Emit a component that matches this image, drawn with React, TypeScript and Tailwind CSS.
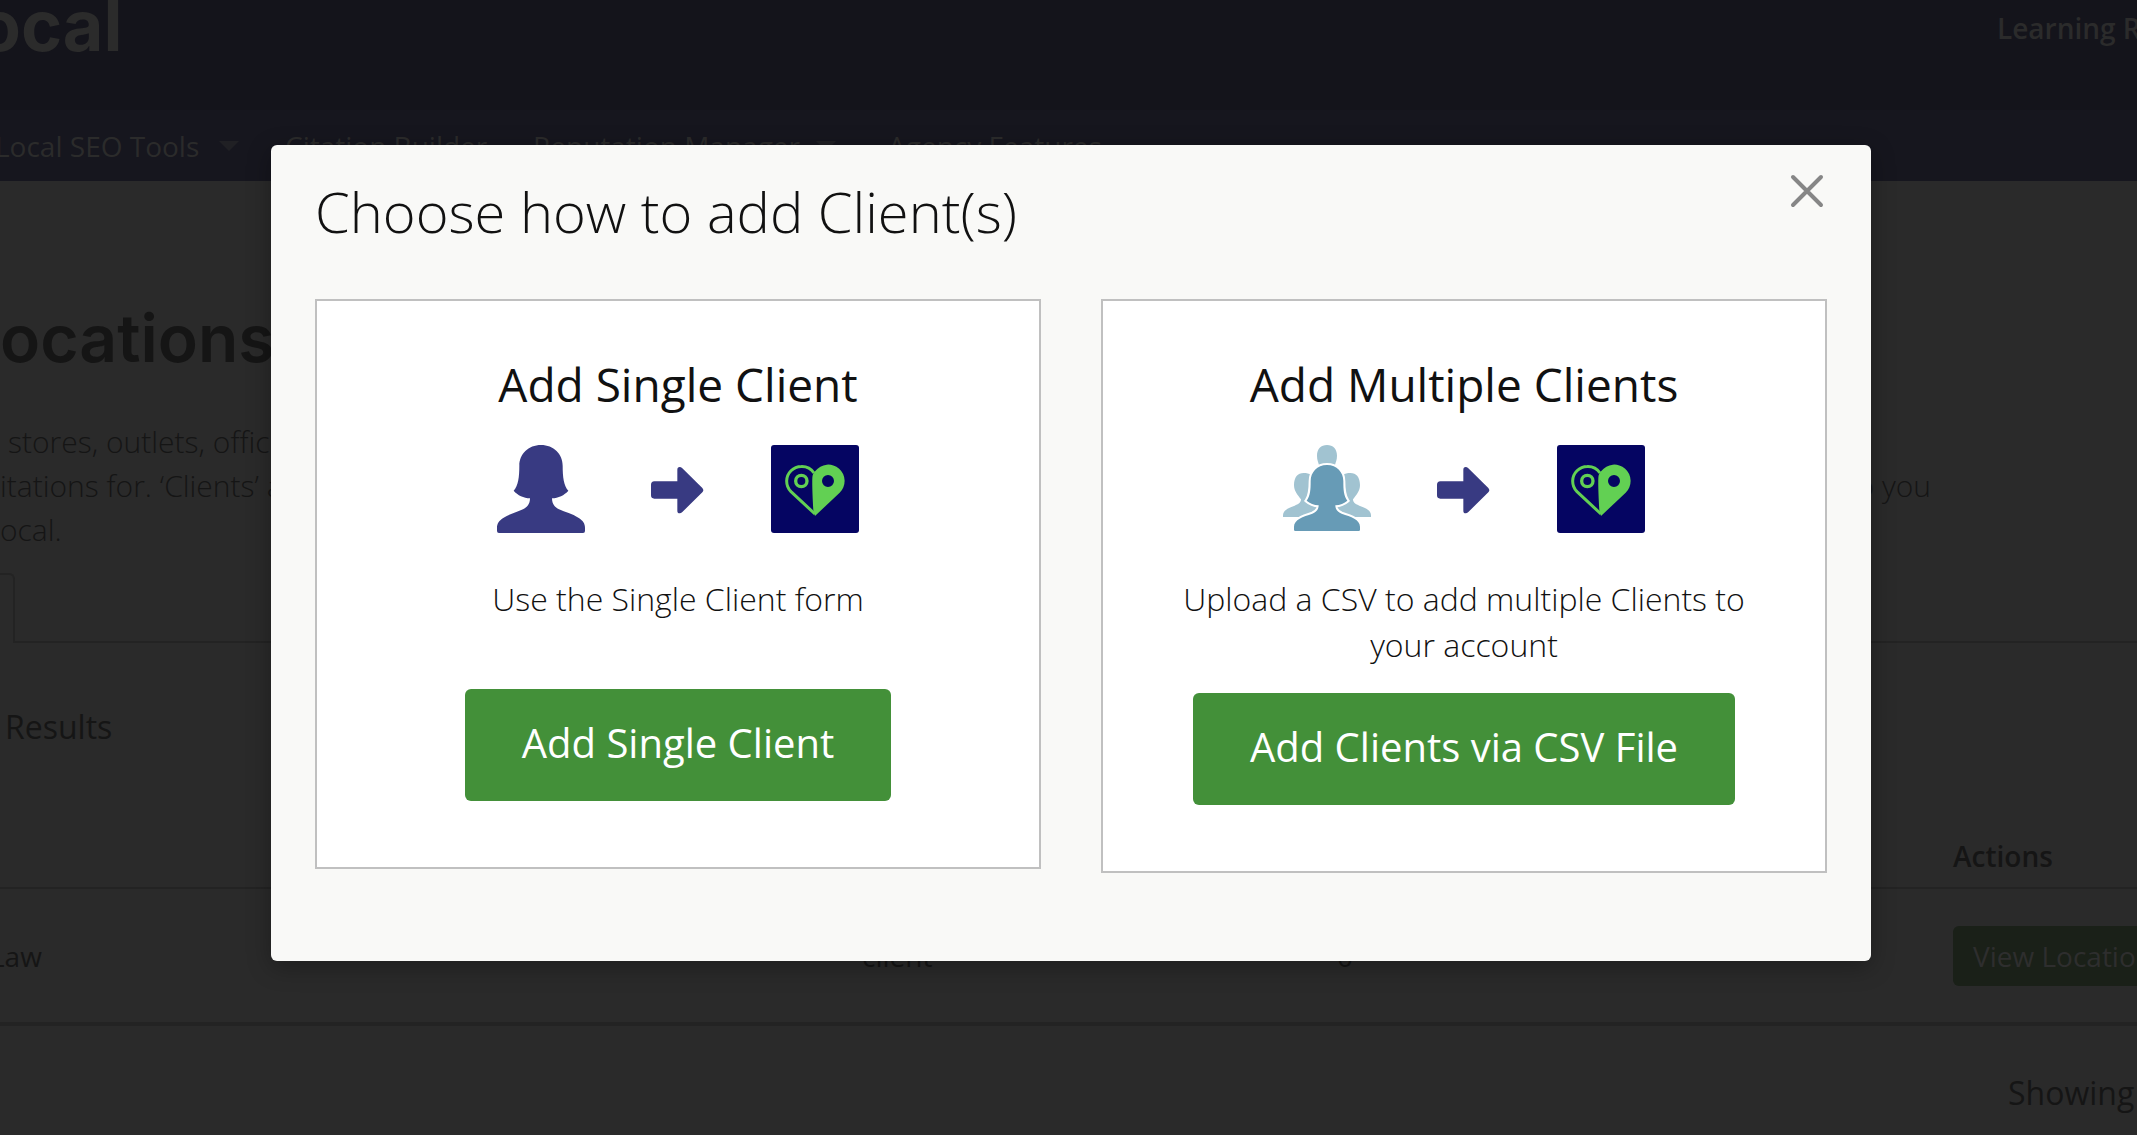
import type { ReactNode } from "react";

function PersonIcon() {
  return (
    <svg viewBox="0 0 264 264" className="size-22" aria-hidden="true">
      <path
        fill="#383a82"
        d="M132 0C94 0 67 27 67 62C67 95 64 122 50 137C62 151 80 159 99 160C99 178 90 187 78 193C60 201 38 207 20 218C6 226 0 236 0 248V258Q0 264 6 264H258Q264 264 264 258V248C264 236 258 226 244 218C226 207 204 201 186 193C174 187 165 178 165 160C184 159 202 151 214 137C200 122 197 95 197 62C197 27 170 0 132 0Z"
      />
    </svg>
  );
}

function GroupIcon() {
  const side =
    "M62 84C44 84 33 97 33 120C33 138 44 150 54 163C54 174 45 178 35 182C15 189 0 197 0 210V216H120V90H85C78 86 71 84 62 84Z";
  const front =
    "M132 60C102 60 83 82 83 108C83 135 82 152 71 167C80 175 93 180 107 181C107 195 98 202 88 206C60 215 33 224 33 245V254Q33 258 37 258H227Q231 258 231 254V245C231 224 204 215 176 206C166 202 157 195 157 181C171 180 184 175 193 167C182 152 181 135 181 108C181 82 162 60 132 60Z";
  return (
    <svg viewBox="0 0 264 264" className="size-22" aria-hidden="true">
      <g fill="#a1c3d1">
        <path d="M132 0C150 0 162 12 162 32C162 45 158 52 156 60H108C106 52 102 45 102 32C102 12 114 0 132 0Z" />
        <path d={side} />
        <path d={side} transform="matrix(-1 0 0 1 264 0)" />
      </g>
      <path d={front} fill="#fff" stroke="#fff" strokeWidth="12" />
      <path d={front} fill="#679bb6" />
    </svg>
  );
}

function ArrowIcon() {
  return (
    <svg viewBox="0 0 168 264" className="h-22 w-14" aria-hidden="true">
      <path
        fill="#383a82"
        d="M3 120Q3 109 13 109H82V74Q82 66 89 66Q93 66 97 70L157 129Q163 136 157 142L97 201Q93 205 89 205Q82 205 82 197V161H13Q3 161 3 151Z"
      />
    </svg>
  );
}

function HeartPinIcon() {
  return (
    <svg viewBox="0 0 264 264" className="size-22" aria-hidden="true">
      <rect width="264" height="264" rx="9" fill="#050562" />
      <path
        fill="none"
        stroke="#62d053"
        strokeWidth="9"
        d="M129 84A44 44 0 0 0 91 64.500A44 44 0 0 0 47 108C47 122 52 132 60 140L132 207"
      />
      <circle cx="91" cy="108" r="17" fill="none" stroke="#62d053" strokeWidth="10" />
      <path
        fill="#62d053"
        fillRule="evenodd"
        d="M132 213L127 196C125 160 123 120 124 98C124 90 128 82 133 78A49 49 0 1 1 206 143ZM171 90A18 18 0 1 0 171 126A18 18 0 1 0 171 90Z"
      />
    </svg>
  );
}

function Caret() {
  return <span className="border-x-10 border-t-10 border-x-transparent border-t-[#202024]" />;
}

function OptionCard({
  title,
  icon,
  text,
  action,
}: {
  title: string;
  icon: ReactNode;
  text: string;
  action: string;
}) {
  return (
    <section className="flex flex-1 flex-col items-center border-2 border-[#c0c0c0] bg-white px-16 pt-12 pb-[66px] text-center">
      <h3 className="text-[46px] leading-[70px]">{title}</h3>
      <div className="mt-[26px] flex w-[362px] items-center justify-between">
        {icon}
        <ArrowIcon />
        <HeartPinIcon />
      </div>
      <p className="mt-[43px] min-h-[88px] text-[32px] leading-[46px] font-light">{text}</p>
      <button
        type="button"
        className="mt-[25px] h-28 rounded-md bg-[#439039] px-[57px] pb-1 text-[40px] leading-[56px] text-white"
      >
        {action}
      </button>
    </section>
  );
}

export default function App() {
  return (
    <div className="relative h-screen overflow-hidden bg-[#2a2a2a] font-['Open_Sans',sans-serif] text-[#151515]">
      <header>
        <div className="flex h-[110px] items-start justify-between bg-[#14141b] text-[#2b2b2b]">
          <span className="-ml-[22px] -mt-[18px] font-['Inter',sans-serif] text-[70px] leading-[88px] font-bold">ocal</span>
          <a href="#learning" className="w-[140px] pt-2 text-[28px] leading-[40px] font-semibold whitespace-nowrap">
            Learning R
          </a>
        </div>
        <nav className="flex h-[71px] items-center bg-[#16161e] text-[28px] leading-[40px] text-[#2b2b2b]">
          <a href="#seo" className="-ml-[5px] flex w-[290px] items-center gap-5">
            Local SEO Tools <Caret />
          </a>
          <a href="#citation" className="w-[248px]">Citation Builder</a>
          <a href="#reputation" className="flex w-[355px] items-center gap-4">
            Reputation Manager <Caret />
          </a>
          <a href="#agency">Agency Features</a>
        </nav>
      </header>

      <main>
        <h1 className="pt-[111px] font-['Inter',sans-serif] text-[66px] leading-[92px] font-semibold">ocations</h1>
        <div className="mt-9 pr-[206px] text-[30px] leading-[44px] font-light">
          <p className="pl-2">stores, outlets, offic</p>
          <p className="flex justify-between">
            <span>itations for. ‘Clients’ a</span>
            <span>to you</span>
          </p>
          <p>ocal.</p>
        </div>
        <div className="mt-[21px] flex h-[70px]">
          <div className="w-[15px] rounded-tr-md border-t-2 border-r-2 border-[#232323]" />
          <div className="flex-1 border-b-2 border-[#232323]" />
        </div>
        <p className="pt-[60px] pl-[5px] text-[32px] leading-[48px]">Results</p>
        <table className="mt-[81px] w-full table-fixed border-b-4 border-[#232323] text-left text-[28px] leading-[40px]">
          <colgroup>
            <col className="w-[862px]" />
            <col className="w-[475px]" />
            <col />
            <col className="w-[184px]" />
          </colgroup>
          <thead>
            <tr className="h-[56px] border-b-2 border-[#232323] align-top">
              <th />
              <th />
              <th />
              <th className="pt-1 font-semibold">Actions</th>
            </tr>
          </thead>
          <tbody>
            <tr className="h-[136px]">
              <td>
                <span className="-ml-[10px]">Law</span>
              </td>
              <td>client</td>
              <td>0</td>
              <td>
                <button
                  type="button"
                  className="h-[60px] rounded-md bg-[#1a2018] px-5 whitespace-nowrap text-[#2e2e2e]"
                >
                  View Locations
                </button>
              </td>
            </tr>
          </tbody>
        </table>
        <p className="ml-auto w-[129px] pt-[43px] text-[32px] leading-[48px]">Showing</p>
      </main>

      <div className="absolute inset-0 flex items-start justify-center pt-[145px] pl-[5px]">
        <div
          role="dialog"
          aria-modal="true"
          aria-labelledby="dialog-title"
          className="w-full max-w-[1600px] rounded-md bg-[#f9f9f7] px-11 pb-[88px] text-[#111] shadow-[0_6px_24px_rgba(0,0,0,0.3)]"
        >
          <div className="flex items-start justify-between pt-[26px]">
            <h2 id="dialog-title" className="text-[56px] leading-[80px] font-light">
              Choose how to add Client(s)
            </h2>
            <button type="button" aria-label="Close" className="mt-0.5 mr-0.5">
              <svg viewBox="0 0 36 36" className="size-9" aria-hidden="true">
                <path d="M4 4L32 32M32 4L4 32" stroke="#868686" strokeWidth="4" strokeLinecap="round" />
              </svg>
            </button>
          </div>
          <div className="mt-12 flex items-start gap-[60px]">
            <OptionCard
              title="Add Single Client"
              icon={<PersonIcon />}
              text="Use the Single Client form"
              action="Add Single Client"
            />
            <OptionCard
              title="Add Multiple Clients"
              icon={<GroupIcon />}
              text="Upload a CSV to add multiple Clients to your account"
              action="Add Clients via CSV File"
            />
          </div>
        </div>
      </div>
    </div>
  );
}
